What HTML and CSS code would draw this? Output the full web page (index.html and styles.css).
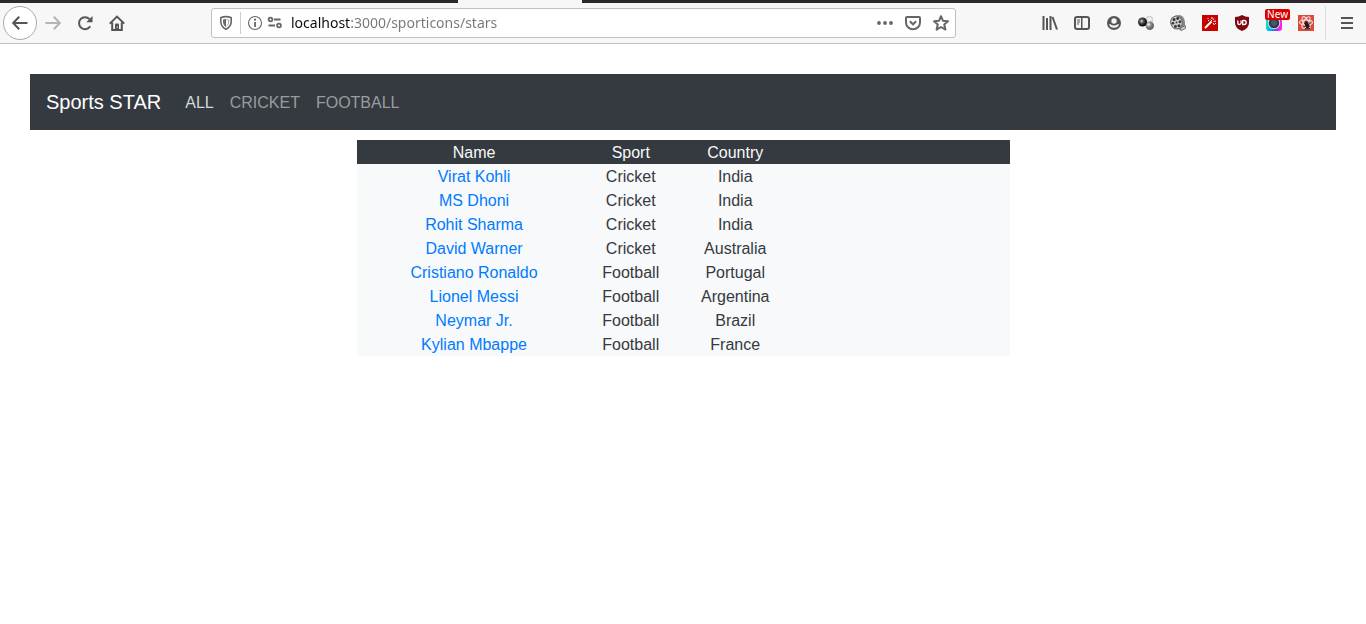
FILE: index.html
```html
<!DOCTYPE html>
<html lang="en">
<head>
<meta charset="utf-8">
<title>Sports STAR</title>
<link rel="stylesheet" href="styles.css">
</head>
<body>
<header class="browser">
  <div class="tabstrip"><div class="active-tab"></div></div>
  <div class="toolbar">
    <button class="tool back" aria-label="Back"><svg width="16" height="16" viewBox="0 0 16 16"><path class="line" d="M15.500 8H1.500M7.200 1.800 1.200 8l6 6.200"/></svg></button>
    <button class="tool faded" aria-label="Forward"><svg width="16" height="16" viewBox="0 0 16 16"><path class="line" d="M.5 8h14M8.800 1.800l6 6.200-6 6.200"/></svg></button>
    <button class="tool" aria-label="Reload"><svg width="16" height="16" viewBox="0 0 16 16"><path class="line" d="M13.2 11.2A6 6 0 1 1 12.4 4"/><path d="M15.5 1v6.2H9.3z"/></svg></button>
    <button class="tool" aria-label="Home"><svg width="16" height="16" viewBox="0 0 16 16"><path class="line" d="M.8 8.600 8 1.600l7.200 7M3.200 7.500V15h9.600V7.500"/><path d="M6 15V9.500Q6 8.500 7 8.500h2q1 0 1 1V15z"/><path fill="#ddd" d="M7.800 11.500h1v1.500h-1z"/></svg></button>
    <div class="spacer"></div>
    <div class="urlbar">
      <button class="site shield" aria-label="Tracking protection"><svg width="16" height="16" viewBox="0 0 16 16"><path fill="none" stroke="currentColor" stroke-width="1.600" d="M8 1.600q3 0 5.200 1.200v3.700c0 4-2.200 6.300-5.200 7.700-3-1.400-5.200-3.700-5.200-7.700V2.800Q5 1.600 8 1.600z"/><path d="M8 4v8C6 11 5 9 5 6.500V4.600Q6.500 4 8 4z"/><path d="M8.500 4.500 10.700 5v1.500c0 2-.7 3.500-2.200 4.700" fill="none" stroke="currentColor" stroke-width=".6"/></svg></button>
      <button class="site" aria-label="Site information"><svg width="16" height="16" viewBox="0 0 16 16"><circle cx="8" cy="8" r="6.500" fill="none" stroke="currentColor" stroke-width="1.100"/><path d="M7.100 7h1.800v5H7.100z"/><circle cx="8" cy="4.700" r="1.100"/></svg></button>
      <button class="site perms" aria-label="Permissions"><svg width="16" height="16" viewBox="0 0 16 16"><g fill="none" stroke="currentColor" stroke-width="1.800"><circle cx="3.500" cy="4.500" r="1.900"/><path d="M7 4.500h6.500M1.500 10.500H8"/><circle cx="12" cy="10.500" r="1.900"/></g></svg></button>
      <input class="address" type="text" aria-label="Address" value="localhost:3000/sporticons/stars" spellcheck="false">
      <button class="action" aria-label="Page actions"><svg width="16" height="16" viewBox="0 0 16 16"><circle cx="2" cy="8" r="1.900"/><circle cx="8" cy="8" r="1.900"/><circle cx="14" cy="8" r="1.900"/></svg></button>
      <button class="action" aria-label="Save to Pocket"><svg width="16" height="16" viewBox="0 0 16 16"><path class="line" d="M2 2h12q1 0 1 1v4.500a7 6.800 0 0 1-14 0V3q0-1 1-1z"/><path class="line" d="m4.800 6.300 3.200 3 3.200-3"/></svg></button>
      <button class="action" aria-label="Bookmark this page"><svg width="16" height="16" viewBox="0 0 16 16"><path class="line" stroke-linejoin="round" d="m8 1.200 2 4.600 5 .5-3.800 3.300 1.200 5L8 12l-4.400 2.600 1.200-5L1 6.300l5-.5z"/></svg></button>
    </div>
    <div class="spacer"></div>
    <button class="tool" aria-label="Library"><svg width="16" height="16" viewBox="0 0 16 16"><path class="line" d="M1.500 1v14M5 3v12M8.500 1v14M10.500 2 15 14.500"/></svg></button>
    <button class="tool" aria-label="Sidebars"><svg width="16" height="16" viewBox="0 0 16 16"><rect class="line" x="1" y="2" width="14" height="12" rx="2"/><path d="M7 2h1.500v12H7zM3 4.500h3v1H3zM3 6.500h3v1H3zM3 8.500h2v1H3z"/></svg></button>
    <button class="tool" aria-label="Account"><svg width="16" height="16" viewBox="0 0 16 16"><circle cx="8" cy="8" r="7"/><circle cx="8" cy="6" r="2.700" fill="#f7f7f7"/><path fill="#f7f7f7" d="M3 9.200h1.500Q5.500 10.500 8 10.500t3.500-1.300H13Q12 12.800 8 12.800T3 9.200z"/></svg></button>
    <button class="tool" aria-label="Spheres extension"><svg width="16" height="16" viewBox="0 0 16 16">
      <defs><radialGradient id="dark" cx=".4" cy=".4"><stop offset="0" stop-color="#ddd"/><stop offset=".45" stop-color="#555"/><stop offset="1" stop-color="#111"/></radialGradient><radialGradient id="mid" cx=".35" cy=".35"><stop offset="0" stop-color="#fff"/><stop offset=".5" stop-color="#999"/><stop offset="1" stop-color="#666"/></radialGradient><radialGradient id="pale"><stop offset="0" stop-color="#fff"/><stop offset="1" stop-color="#ccc"/></radialGradient></defs>
      <circle cx="11.500" cy="4.500" r="3.800" fill="url(#pale)"/><circle cx="11.800" cy="10.700" r="4.200" fill="url(#mid)"/><circle cx="4.500" cy="7" r="4.500" fill="url(#dark)"/></svg></button>
    <button class="tool" aria-label="Film extension"><svg width="16" height="16" viewBox="0 0 16 16"><path fill="#888" d="M5 .8 10 0Q15 2 15 8v4l-3 3.500L7 14z"/><path fill="#ccc" stroke="#555" stroke-width=".7" d="m10 12.500 5.500-1.500v2.500L11 15.500z"/><ellipse cx="6.500" cy="7.500" rx="5.800" ry="6.500" fill="#ccc" stroke="#666" transform="rotate(-12 6.500 7.500)"/><g fill="#333"><circle cx="4" cy="4.500" r="1.500"/><circle cx="7.700" cy="3.500" r="1.400"/><circle cx="10" cy="6.800" r="1.400"/><circle cx="9" cy="10.800" r="1.500"/><circle cx="5.500" cy="11.500" r="1.400"/><circle cx="2.900" cy="8.300" r="1.300"/><circle cx="6.500" cy="7.400" r=".9"/></g></svg></button>
    <button class="tool" aria-label="Magic wand extension"><svg width="16" height="16" viewBox="0 0 16 16"><path fill="#c70000" d="M0 0h16v16H0z"/><path stroke="#fff" stroke-width="2.200" d="m3 13 6.500-6.500"/><path stroke="#fff" stroke-width="1" d="M8.500 4.500 10 6M10 2v2M12 3.500 11 5M11.500 6.500 14 6M11 8l1.500 2M5.500 3l1 1M13 8.500h1M6 5.500h1"/></svg></button>
    <button class="tool" aria-label="uBlock Origin"><svg width="16" height="16" viewBox="0 0 16 16"><path fill="#800610" d="M8 0q3 2 7 2v6q0 5-7 8-7-3-7-8V2q4 0 7-2z"/><path fill="none" stroke="#fff" stroke-width="1.300" d="M3.800 5.500v2.700q0 1.300 1.500 1.300t1.800-1.300V5.500M8.700 5v4.500h1.500q2 0 2-2t-2-2H8.700"/></svg></button>
    <button class="tool badged" aria-label="Color extension, new"><svg width="16" height="16" viewBox="0 0 16 16">
      <defs><linearGradient id="hue" x1="0" y1="0" x2="1" y2=".3"><stop offset="0" stop-color="#ff8a00"/><stop offset=".2" stop-color="#00e5d0"/><stop offset=".55" stop-color="#00a8ff"/><stop offset=".8" stop-color="#5b4bff"/><stop offset="1" stop-color="#ff20e8"/></linearGradient></defs>
      <rect width="16" height="16" rx="3" fill="url(#hue)"/><circle cx="8" cy="8" r="6.200" fill="#d5e5f0"/><circle cx="8" cy="8" r="5.300" fill="#303a4b"/><circle cx="8" cy="8" r="3" fill="#4b5664"/></svg><span class="badge">New</span></button>
    <button class="tool" aria-label="React extension"><svg width="16" height="16" viewBox="0 0 16 16"><path fill="#d94b3d" d="M0 0h16v16H0z"/><g fill="none" stroke="#f4dedb" stroke-width="1.100"><ellipse cx="8" cy="7.500" rx="6.500" ry="2.500"/><ellipse cx="8" cy="7.500" rx="6.500" ry="2.500" transform="rotate(60 8 7.500)"/><ellipse cx="8" cy="7.500" rx="6.500" ry="2.500" transform="rotate(120 8 7.500)"/></g><ellipse cx="9" cy="10" rx="1.900" ry="3.300" fill="#221b1b" transform="rotate(-15 9 10)"/><path stroke="#221b1b" stroke-width="1" d="m6 8.500 6 3M6 12l6-3.500M7.500 6.500l3 1M7 14l5-.5"/></svg></button>
    <button class="tool menu" aria-label="Open menu"><svg width="16" height="16" viewBox="0 0 16 16"><path d="M2 2h12v2H2zM2 7h12v2H2zM2 12h12v2H2z"/></svg></button>
  </div>
</header>
<main class="page">
  <nav class="navbar">
    <a class="brand" href="#">Sports STAR</a>
    <a class="nav-link current" href="#">ALL</a>
    <a class="nav-link" href="#">CRICKET</a>
    <a class="nav-link" href="#">FOOTBALL</a>
  </nav>
  <table class="stars">
    <colgroup><col class="col-name"><col class="col-sport"><col class="col-country"><col></colgroup>
    <thead><tr><th>Name</th><th>Sport</th><th>Country</th><th></th></tr></thead>
    <tbody>
      <tr><td><a href="#">Virat Kohli</a></td><td>Cricket</td><td>India</td><td></td></tr>
      <tr><td><a href="#">MS Dhoni</a></td><td>Cricket</td><td>India</td><td></td></tr>
      <tr><td><a href="#">Rohit Sharma</a></td><td>Cricket</td><td>India</td><td></td></tr>
      <tr><td><a href="#">David Warner</a></td><td>Cricket</td><td>Australia</td><td></td></tr>
      <tr><td><a href="#">Cristiano Ronaldo</a></td><td>Football</td><td>Portugal</td><td></td></tr>
      <tr><td><a href="#">Lionel Messi</a></td><td>Football</td><td>Argentina</td><td></td></tr>
      <tr><td><a href="#">Neymar Jr.</a></td><td>Football</td><td>Brazil</td><td></td></tr>
      <tr><td><a href="#">Kylian Mbappe</a></td><td>Football</td><td>France</td><td></td></tr>
    </tbody>
  </table>
</main>
</body>
</html>
```

FILE: styles.css
```css
* { box-sizing: border-box; }

body {
  margin: 0;
  background: #fff;
  color: #343a40;
  font: 16px/24px "Liberation Sans", Arial, sans-serif;
}

a { color: #007bff; text-decoration: none; }

button {
  display: flex;
  align-items: center;
  justify-content: center;
  flex: none;
  padding: 0;
  border: 0;
  background: none;
  color: #555;
}

svg { display: block; fill: currentColor; }
.line { fill: none; stroke: currentColor; stroke-width: 2; }

/* Browser chrome */
.tabstrip {
  display: flex;
  height: 3px;
  padding-left: 458px;
  background: #2b292b;
}
.active-tab { width: 124px; background: #f7f7f7; }

.toolbar {
  display: flex;
  align-items: center;
  height: 41px;
  padding: 0 3px;
  background: #f7f7f7;
  border-bottom: 1px solid #c3c3c3;
}
.tool { width: 32px; height: 34px; }
.back {
  width: 34px;
  border: 1px solid #aaa;
  border-radius: 50%;
  background: #fff;
}
.faded { color: #b5b5b5; }
.spacer { flex: 78; }

.urlbar {
  display: flex;
  align-items: center;
  flex: 737;
  height: 30px;
  padding-left: 6px;
  background: #fff;
  border: 1px solid #c0c0c0;
  border-radius: 3px;
}
.site { width: 20px; height: 22px; color: #666; }
.shield { justify-content: flex-start; width: 23px; margin-right: 4px; border-right: 1px solid #ccc; }
.perms { margin-right: 6px; }
.address {
  flex: 1;
  min-width: 0;
  height: 28px;
  padding: 0;
  border: 0;
  outline: 0;
  color: transparent;
  background: linear-gradient(to right, #0c0c0d 59px, #777 59px);
  -webkit-background-clip: text;
  background-clip: text;
  font: 14px/28px "Noto Sans", sans-serif;
}
.action { width: 28px; height: 28px; color: #666; }

.badged { position: relative; }
.badge {
  position: absolute;
  top: 3px;
  right: 0;
  padding: 0 2px;
  border-radius: 2px;
  background: #d90000;
  color: #fff;
  font: 10px/11px "Noto Sans", sans-serif;
}
.menu { width: 38px; margin-left: 3px; padding-left: 5px; border-left: 1px solid #ddd; }

/* Page */
.page { padding: 30px; }

.navbar {
  display: flex;
  align-items: center;
  padding: 8px 16px;
  background: #343a40;
}
.brand { margin-right: 16px; color: #fff; font-size: 20px; line-height: 40px; }
.nav-link { padding: 10px 8px 8px; line-height: 22px; color: #999c9f; }
.current { color: #d6d8d9; }

.stars {
  width: 50%;
  margin: 10px auto 0;
  border-collapse: collapse;
  table-layout: fixed;
  background: #f8f9fa;
  text-align: center;
}
.stars th, .stars td { padding: 2px 0 0; line-height: 22px; font-weight: 400; }
.stars thead { background: #343a40; color: #f8f9fa; }
.col-name { width: 36%; }
.col-sport { width: 12%; }
.col-country { width: 20%; }
```
